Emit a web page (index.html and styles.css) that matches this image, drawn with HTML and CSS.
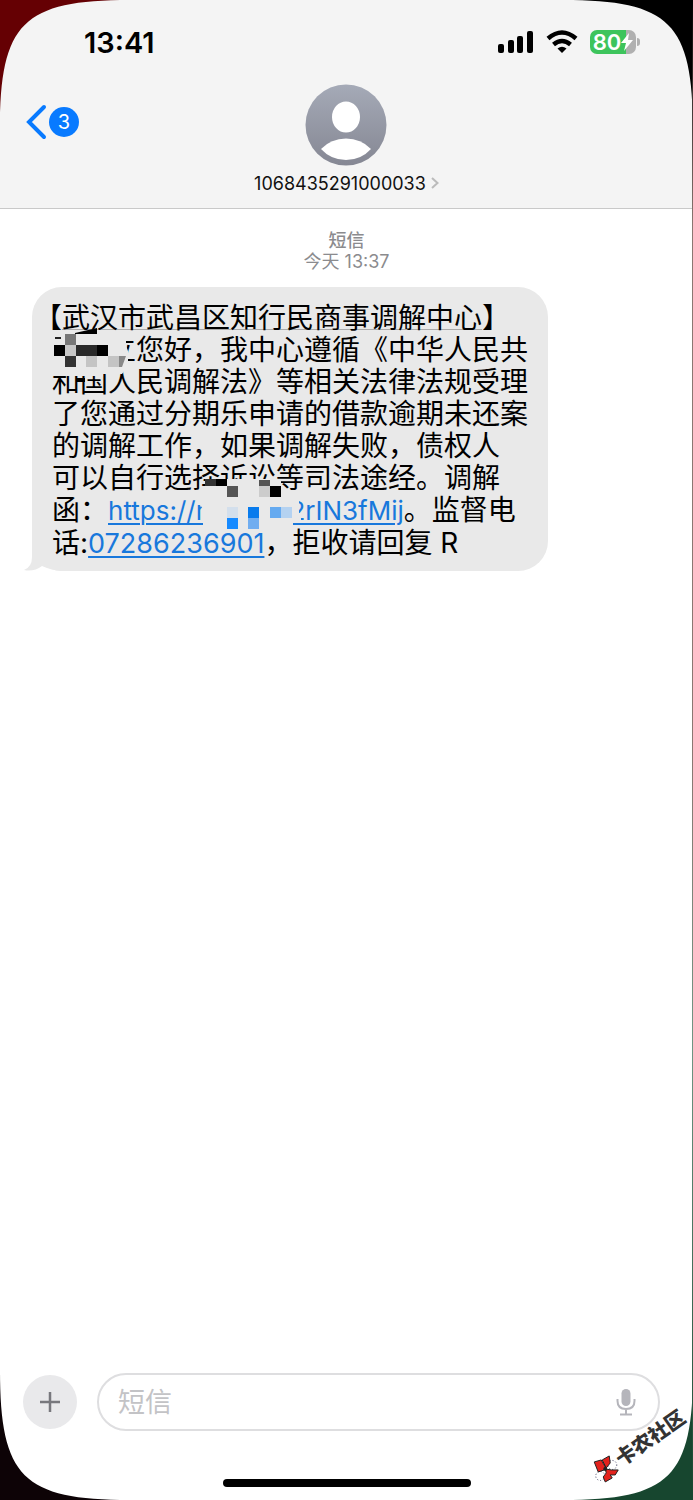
FILE: index.html
```html
<!doctype html>
<html lang="zh-CN">

<head>
  <title>短信</title>
  <meta charset="utf-8">
  <meta name="viewport" content="width=device-width, initial-scale=1.0">
  <link rel="stylesheet" href="styles.css">
</head>

<body>
  <div id="phone">
    <header>
      <div class="statusBar">
        <span class="clock">13:41</span>
        <div class="statusIcons">
          <svg width="36" height="24" viewBox="0 0 36 24">
            <rect x="0" y="14" width="6" height="9" rx="2" />
            <rect x="10" y="10" width="6" height="13" rx="2" />
            <rect x="19" y="6" width="6" height="17" rx="2" />
            <rect x="29" y="1" width="6" height="22" rx="2" />
          </svg>
          <svg width="32" height="24" viewBox="0 0 32 24">
            <path d="M2 8.500Q16 -3.500 30 8.500M7.500 14.500Q16 7.500 24.500 14.500" fill="none" stroke="#000" stroke-width="4.500" />
            <path d="M11.500 18.500Q16 15 20.500 18.500L16 23Z" />
          </svg>
          <div class="battery">
            <span>80</span>
            <svg width="12" height="18" viewBox="0 0 12 18">
              <path d="M8 0L0 10H5L3 18L12 7H7Z" fill="#fff" />
            </svg>
          </div>
        </div>
      </div>
      <div class="navBar">
        <a href="#" class="back">
          <svg width="22" height="36" viewBox="0 0 22 36">
            <path d="M18 3L3 18L18 33" />
          </svg>
          <span class="badge">3</span>
        </a>
        <a href="#" class="contact">
          <svg width="82" height="82" viewBox="0 0 82 82">
            <defs>
              <linearGradient id="avatarFill" x1="0" y1="0" x2="0" y2="1">
                <stop offset="0" stop-color="#a5aab7" />
                <stop offset="1" stop-color="#858793" />
              </linearGradient>
            </defs>
            <circle cx="41" cy="41" r="40.500" fill="url(#avatarFill)" />
            <ellipse cx="41" cy="33" rx="14" ry="15.500" fill="#fff" />
            <path d="M16 65Q26 54.500 41 54.500T66 65Q56 76 41 76T16 65Z" fill="#fff" />
          </svg>
          <span class="number">1068435291000033
            <svg width="8" height="14" viewBox="0 0 8 14">
              <path d="M1 2L6.500 7L1 12" fill="none" stroke="#bbb" stroke-width="2" />
            </svg>
          </span>
        </a>
      </div>
    </header>

    <main>
      <p class="stamp"><b>短信</b><br>今天 13:37</p>
      <div class="bubble">
        <!-- name and part of the link are pixelated by the svg below -->
        <p>
          <span class="bracket">【</span><span class="place">武汉市武昌区知行民商事调解中心</span>】<br>
          &#12288;&#12288;立您好，我中心遵循《中华人民共<br>
          和国人民调解法》等相关法律法规受理<br>
          了您通过分期乐申请的借款逾期未还案<br>
          的调解工作，如果调解失败，债权人<br>
          可以自行选择诉讼等司法途经。调解<br>
          函：<a href="#">https://r</a><span class="gap"></span><a href="#">2rIN3fMij</a>。监督电<br>
          话:<a href="#" class="tel">07286236901</a>，拒收请回复 R
        </p>
        <svg class="mosaic" width="516" height="284" viewBox="0 0 516 284">
          <path d="M21 47H44L58 43H80L94 47V58L96 64V79L90 87H71V89H21Z" fill="#e9e9e9" />
          <path d="M23 51H29" stroke="#222" stroke-width="2" />
          <path d="M43 46L65 41V47H43Z" />
          <path d="M33 47H44V58H33Z" fill="#777" />
          <path d="M22 58H33V69H22Z" />
          <path d="M33 58H44V69H33Z" fill="#c6c6c6" />
          <path d="M44 58H65V69H44Z" fill="#292929" />
          <path d="M65 58H76V69H65Z" />
          <path d="M33 69H44V80H33Z" fill="#333" />
          <path d="M54 69H65V80H54ZM76 69H87V80H76Z" fill="#c4c4c4" />
          <path d="M87 69H94L90 80H87Z" fill="#888" />
          <path d="M44 91H53V95H44Z" />
          <path d="M173 192H249V203H261V214H267V226H269V233H261V242H171V222L164 212V203H173Z" fill="#e9e9e9" />
          <path d="M173 192H184V199H173Z" fill="#333" />
          <path d="M184 192H195V199H184Z" />
          <path d="M195 199H206V210H195Z" fill="#555" />
          <path d="M227 193H238V199H227Z" fill="#555" />
          <path d="M227 199H238V210H227Z" fill="#ccc" />
          <path d="M238 199H249V210H238Z" />
          <path d="M195 220H206V231H195Z" fill="#d3dfec" />
          <path d="M216 220H227V231H216Z" fill="#087bed" />
          <path d="M238 220H249V231H238Z" fill="#65aaf0" />
          <path d="M249 220H260V231H249Z" fill="#b4d2f1" />
          <path d="M195 231H206V242H195Z" fill="#168aff" />
          <path d="M216 231H227V242H216Z" fill="#70adf0" />
        </svg>
        <svg class="tail" width="40" height="32" viewBox="0 0 40 32">
          <path d="M8 0V18Q8 28 0 31Q10 33 18 27Q26 31 38 32V0Z" fill="#e9e9e9" />
        </svg>
      </div>
    </main>

    <footer>
      <form class="composer">
        <button type="button" class="plus" aria-label="添加">
          <svg width="22" height="22" viewBox="0 0 22 22">
            <path d="M11 1V21M1 11H21" stroke="#78787d" stroke-width="2.500" />
          </svg>
        </button>
        <div class="field">
          <input type="text" placeholder="短信" aria-label="短信">
          <svg width="20" height="28" viewBox="0 0 20 28">
            <rect x="5.500" y="1" width="9" height="17" rx="4.500" fill="#b5b5bb" />
            <path d="M1.500 11V13Q1.500 21 10 21T18.500 13V11M10 21V26M4 26.500H16" fill="none" stroke="#b5b5bb" stroke-width="2" />
          </svg>
        </div>
      </form>
      <div class="homeBar"></div>
    </footer>

    <!-- rounded display corners -->
    <svg class="corner topLeft" viewBox="0 0 130 130">
      <path d="M0 0H130C23 0 0 23 0 130Z" />
    </svg>
    <svg class="corner topRight" viewBox="0 0 130 130">
      <path d="M0 0H130C23 0 0 23 0 130Z" />
    </svg>
    <svg class="corner bottomLeft" viewBox="0 0 130 130">
      <path d="M0 0H130C23 0 0 23 0 130Z" />
    </svg>
    <svg class="corner bottomRight" viewBox="0 0 130 130">
      <path d="M0 0H130C23 0 0 23 0 130Z" />
    </svg>
    <div class="edge"></div>

    <div class="watermark">
      <svg width="28" height="28" viewBox="0 0 28 28">
        <circle cx="20" cy="10" r="4.500" fill="#fff" stroke="#446" stroke-dasharray="1 2" />
        <circle cx="8" cy="21" r="4.500" fill="#fff" stroke="#446" stroke-dasharray="1 2" />
        <path d="M2 7L9 5L13 12L12 15L6 17Z" fill="#e3221c" stroke="#222" />
        <path d="M10 5L17 1L18 8L14 13Z" fill="#e3221c" stroke="#222" />
        <path d="M13 14L19 15L26 15L23 20L18 20L20 23L13 27L11 22L14 18Z" fill="#e3221c" stroke="#222" />
        <circle cx="13" cy="14" r="2" fill="#222" />
      </svg>
      <span>卡农社区</span>
    </div>
  </div>
</body>

</html>
```
FILE: styles.css
```css
body {
  margin: 0;
  background-color: #fff;
  color: #000;
  font-family: Inter, "Noto Sans CJK SC", sans-serif;
}

a {
  color: #1878dc;
}

#phone {
  position: relative;
  display: flex;
  flex-direction: column;
  min-height: 100vh;
  overflow: hidden;
}

header {
  background-color: #f4f4f4;
  border-bottom: 1px solid #c9c9c9;
}

.statusBar {
  display: flex;
  justify-content: space-between;
  align-items: center;
  height: 84px;
  padding: 0 57px 0 84px;
  box-sizing: border-box;
}

.clock {
  font-size: 29px;
  font-weight: 600;
}

.statusIcons {
  display: flex;
  align-items: center;
  gap: 12px;
}

.battery {
  position: relative;
  display: flex;
  align-items: center;
  justify-content: center;
  width: 46px;
  height: 24px;
  border-radius: 7px;
  background: linear-gradient(to right, #3dc45c 78%, #b0b0b0 78%);
  color: #fff;
  font-size: 22px;
  font-weight: 600;
}

.battery::after {
  content: "";
  position: absolute;
  right: -4px;
  top: 8px;
  width: 3px;
  height: 8px;
  border-radius: 0 4px 4px 0;
  background-color: #b0b0b0;
}

.navBar {
  display: grid;
  grid-template-columns: 1fr auto 1fr;
  height: 124px;
}

.back {
  display: flex;
  align-items: center;
  align-self: start;
  gap: 1px;
  padding: 20px 0 0 26px;
  text-decoration: none;
}

.back path {
  fill: none;
  stroke: #087aff;
  stroke-width: 4;
  stroke-linecap: round;
}

.badge {
  width: 30px;
  height: 30px;
  border-radius: 15px;
  background-color: #087aff;
  color: #fff;
  font-size: 20px;
  line-height: 30px;
  text-align: center;
}

.contact {
  display: flex;
  flex-direction: column;
  align-items: center;
  gap: 6px;
  color: #111;
  text-decoration: none;
}

.number {
  font-size: 18px;
  line-height: 24px;
}

main {
  flex: 1;
  padding: 21px 32px;
}

.stamp {
  margin: 0 0 15px;
  color: #8b8b8e;
  font-size: 18px;
  line-height: 21px;
  text-align: center;
}

.stamp b {
  font-weight: 500;
}

.bubble {
  position: relative;
  isolation: isolate;
  width: 516px;
  max-width: 100%;
  border-radius: 30px;
  background-color: #e9e9e9;
}

.bubble p {
  margin: 0;
  padding: 15px 0 11px 20px;
  font-size: 28px;
  line-height: 32px;
  white-space: nowrap;
}

.bubble a {
  font-size: 26px;
  text-decoration-thickness: 2px;
  text-underline-offset: 3px;
}

.bubble .tel {
  font-size: 27px;
}

.bracket {
  margin-left: -18px;
}

.place {
  text-decoration: underline #aaa 1px;
  text-decoration-skip-ink: none;
  text-underline-offset: 1px;
}

.gap {
  display: inline-block;
  width: 84px;
}

.mosaic {
  position: absolute;
  left: 0;
  top: 0;
}

.tail {
  position: absolute;
  left: -8px;
  bottom: 0;
  z-index: -1;
}

.composer {
  display: flex;
  align-items: center;
  gap: 20px;
  padding: 0 33px 0 23px;
}

.plus {
  display: flex;
  align-items: center;
  justify-content: center;
  width: 54px;
  height: 54px;
  padding: 0;
  border: none;
  border-radius: 27px;
  background-color: #e9e9eb;
}

.field {
  display: flex;
  flex: 1;
  align-items: center;
  height: 58px;
  padding: 0 22px 0 19px;
  border: 2px solid #dedee0;
  border-radius: 29px;
  box-sizing: border-box;
}

.field input {
  flex: 1;
  min-width: 0;
  padding: 0;
  border: none;
  outline: none;
  background: none;
  font-family: Inter, "Noto Sans CJK SC", sans-serif;
  font-size: 27px;
}

.field input::placeholder {
  color: #c3c3c6;
}

.homeBar {
  width: 248px;
  height: 8px;
  margin: 48px auto 13px;
  border-radius: 4px;
  background-color: #000;
}

.corner {
  position: absolute;
  width: 130px;
  height: 130px;
}

.topLeft {
  top: 0;
  left: 0;
  fill: #650003;
}

.topRight {
  top: 0;
  right: 0;
  transform: rotate(90deg);
}

.bottomLeft {
  bottom: 0;
  left: 0;
  fill: #0d0306;
  transform: rotate(270deg);
}

.bottomRight {
  right: 0;
  bottom: 0;
  fill: #17462f;
  transform: rotate(180deg);
}

.edge {
  position: absolute;
  top: 0;
  right: 0;
  bottom: 0;
  width: 1px;
  background: linear-gradient(#000, #8b7772 15%, #8b7772 50%, #6f9583 70%, #17462f);
}

.watermark {
  position: absolute;
  right: 0;
  bottom: 40px;
  display: flex;
  align-items: center;
  color: #333;
  font-size: 20px;
  font-weight: 900;
  line-height: 28px;
  transform: rotate(-35deg);
}

.watermark svg {
  transform: rotate(35deg);
}
```
